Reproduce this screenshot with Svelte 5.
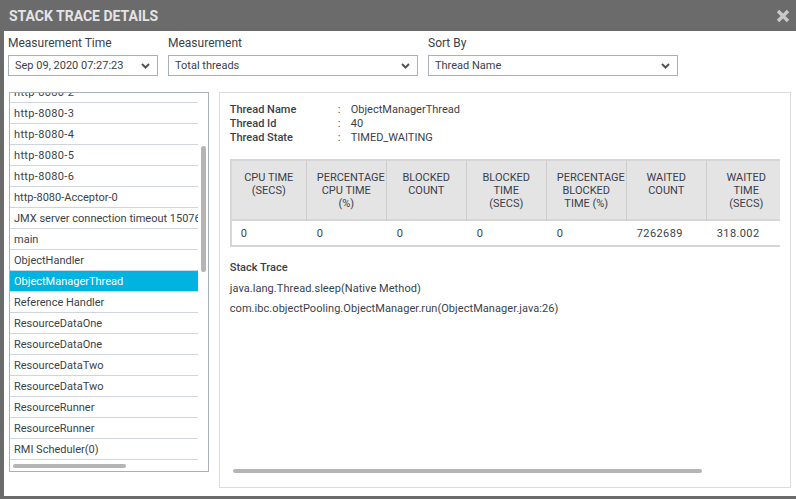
<script>
    const filters = [
        { label: 'Measurement Time', value: 'Sep 09, 2020 07:27:23', width: 150 },
        { label: 'Measurement', value: 'Total threads', width: 250 },
        { label: 'Sort By', value: 'Thread Name', width: 250 }
    ];

    const threads = [
        'http-8080-2', 'http-8080-3', 'http-8080-4', 'http-8080-5', 'http-8080-6',
        'http-8080-Acceptor-0', 'JMX server connection timeout 15076', 'main',
        'ObjectHandler', 'ObjectManagerThread', 'Reference Handler', 'ResourceDataOne',
        'ResourceDataOne', 'ResourceDataTwo', 'ResourceDataTwo', 'ResourceRunner',
        'ResourceRunner', 'RMI Scheduler(0)'
    ];
    const selected = 'ObjectManagerThread';

    const info = [
        ['Thread Name', 'ObjectManagerThread'],
        ['Thread Id', '40'],
        ['Thread State', 'TIMED_WAITING']
    ];

    const columns = [
        { head: ['CPU TIME', '(SECS)'], value: '0' },
        { head: ['PERCENTAGE', 'CPU TIME', '(%)'], value: '0' },
        { head: ['BLOCKED', 'COUNT'], value: '0' },
        { head: ['BLOCKED', 'TIME', '(SECS)'], value: '0' },
        { head: ['PERCENTAGE', 'BLOCKED', 'TIME (%)'], value: '0' },
        { head: ['WAITED', 'COUNT'], value: '7262689' },
        { head: ['WAITED', 'TIME', '(SECS)'], value: '318.002' }
    ];

    const trace = [
        'java.lang.Thread.sleep(Native Method)',
        'com.ibc.objectPooling.ObjectManager.run(ObjectManager.java:26)'
    ];
</script>

<div class="dialog">
    <header>
        <h1>STACK TRACE DETAILS</h1>
        <svg class="close" width="14" height="14" viewBox="0 0 14 14">
            <path d="M2 2 L12 12 M12 2 L2 12" stroke="#c9c9c9" stroke-width="3.4" fill="none" />
        </svg>
    </header>

    <div class="body">
        <div class="filters">
            {#each filters as f}
                <div class="filter">
                    <span class="label">{f.label}</span>
                    <div class="select" style="width: {f.width}px">
                        <span>{f.value}</span>
                        <svg width="9" height="6" viewBox="0 0 9 6">
                            <path d="M1 1 L4.5 4.5 L8 1" stroke="#555" stroke-width="2" fill="none" />
                        </svg>
                    </div>
                </div>
            {/each}
        </div>

        <div class="main">
            <div class="list">
                <ul>
                    {#each threads as t}
                        <li class:active={t === selected} class:numbered={/^http-8080-\d$/.test(t)}>{t}</li>
                    {/each}
                </ul>
                <div class="vbar"></div>
                <div class="hbar"></div>
            </div>

            <div class="detail">
                <dl>
                    {#each info as [k, v]}
                        <div class="info">
                            <dt>{k}</dt>
                            <dd><span class="colon">:</span>{v}</dd>
                        </div>
                    {/each}
                </dl>

                <div class="table">
                    {#each columns as c}
                        <div class="col">
                            <div class="head">
                                {#each c.head as line}
                                    <span>{line}</span>
                                {/each}
                            </div>
                            <div class="cell">{c.value}</div>
                        </div>
                    {/each}
                </div>

                <h2>Stack Trace</h2>
                {#each trace as line}
                    <p>{line}</p>
                {/each}

                <div class="hbar wide"></div>
            </div>
        </div>
    </div>
</div>

<style>
:global(body) {
    margin: 0;
    background: #fff;
}

.dialog {
    width: 796px;
    height: 499px;
    box-sizing: border-box;
    display: flex;
    flex-direction: column;
    background: #6b6b6b;
    font-family: Roboto, "Liberation Sans", sans-serif;
    font-size: 11px;
    color: #3a3f4a;
    overflow: hidden;
}

header {
    height: 31px;
    flex: none;
    display: flex;
    align-items: center;
    justify-content: space-between;
    padding: 0 6px 0 9px;
}

h1 {
    margin: 0;
    font-size: 14px;
    font-weight: 700;
    color: #e4e4e4;
}

.body {
    height: 465px;
    margin-left: 4px;
    background: #fff;
    padding: 6px 5px 9px 4px;
    box-sizing: border-box;
    display: flex;
    flex-direction: column;
}

.filters {
    display: flex;
    gap: 10px;
}

.filter {
    display: flex;
    flex-direction: column;
}

.label {
    font-size: 12px;
    line-height: 12px;
    margin-bottom: 6px;
    height: 12px;
}

.select {
    height: 21px;
    box-sizing: border-box;
    border: 1px solid #a9b0ba;
    display: flex;
    align-items: center;
    justify-content: space-between;
    padding: 0 7px 0 6px;
}

.main {
    flex: 1;
    min-height: 0;
    display: flex;
    margin-top: 16px;
    padding-left: 1px;
    gap: 10px;
}

.list {
    position: relative;
    width: 200px;
    height: 380px;
    box-sizing: border-box;
    border: 1px solid #a9b0ba;
    overflow: hidden;
}

ul {
    list-style: none;
    margin: -11px 0 0;
    padding: 0;
    width: 188px;
}

li {
    height: 21px;
    box-sizing: border-box;
    border-bottom: 1px solid #d0d4dc;
    padding-left: 4px;
    line-height: 21px;
    white-space: nowrap;
    overflow: hidden;
}

li.numbered {
    letter-spacing: 0.35px;
}

li.active {
    background: #00b3e0;
    color: #fff;
}

.vbar {
    position: absolute;
    left: 191px;
    top: 53px;
    width: 5px;
    height: 126px;
    border-radius: 3px;
    background: #b5b5b5;
}

.hbar {
    position: absolute;
    left: 3px;
    bottom: 3px;
    width: 113px;
    height: 4px;
    border-radius: 2px;
    background: #b5b5b5;
}

.hbar.wide {
    left: 13px;
    bottom: 14px;
    width: 469px;
}

.detail {
    position: relative;
    width: 573px;
    height: 396px;
    box-sizing: border-box;
    border: 1px solid #dcdcdc;
    padding: 10px 10px 0;
}

dl {
    margin: 0 0 13px;
    height: 43px;
}

.info {
    display: flex;
    height: 14px;
    line-height: 14px;
}

dt {
    width: 108px;
    font-weight: 500;
}

dd {
    margin: 0;
}

.colon {
    display: inline-block;
    width: 13px;
}

.table {
    width: 550px;
    display: flex;
    overflow: hidden;
    box-sizing: border-box;
    border-top: 2px solid #d6d6d6;
    border-bottom: 2px solid #d6d6d6;
    border-left: 2px solid #d6d6d6;
    height: 88px;
}

.col {
    flex: none;
    width: 80px;
    box-sizing: border-box;
}

.col:first-child {
    width: 75px;
}

.head {
    height: 60px;
    box-sizing: border-box;
    background: #e4e4e4;
    border-right: 1px solid #cdcdcd;
    border-bottom: 2px solid #d6d6d6;
    padding: 10px 10px 0;
    text-align: center;
    line-height: 13px;
    white-space: nowrap;
}

.head span {
    display: block;
}

.cell {
    padding-left: 9px;
    line-height: 25px;
    letter-spacing: 0.4px;
}

.col:not(:first-child) .cell {
    padding-left: 10px;
}

h2 {
    margin: 14px 0 4px;
    font-size: 11px;
    line-height: 14px;
    font-weight: 500;
}

p {
    margin: 0;
    line-height: 20px;
    letter-spacing: 0.06px;
}
</style>
